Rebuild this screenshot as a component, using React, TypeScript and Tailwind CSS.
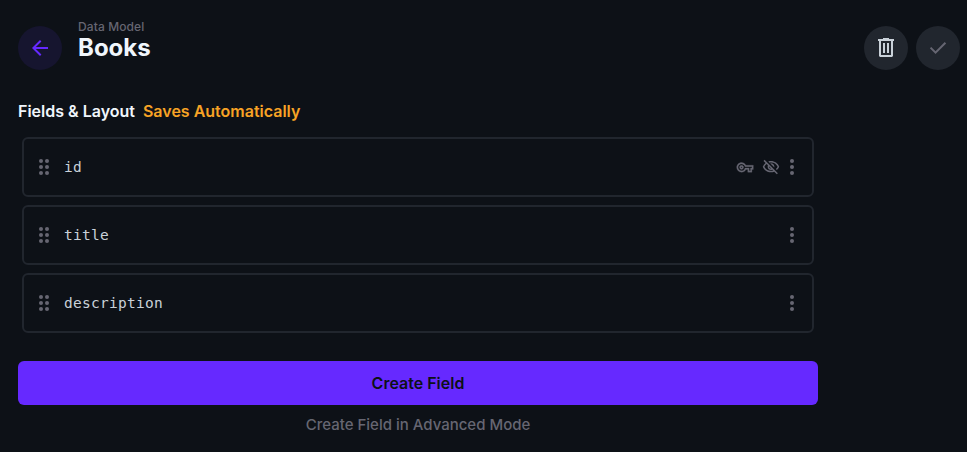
import type { ReactNode } from "react";

const dotRows = [6, 12, 18];

function DragHandle() {
  return (
    <svg viewBox="0 0 24 24" className="size-6 fill-[#666672]">
      {dotRows.map((y) => (
        <g key={y}>
          <circle cx="9" cy={y} r="2" />
          <circle cx="15" cy={y} r="2" />
        </g>
      ))}
    </svg>
  );
}

function MoreIcon() {
  return (
    <svg viewBox="0 0 24 24" className="size-6 fill-[#666672]">
      {dotRows.map((y) => (
        <circle key={y} cx="12" cy={y} r="2" />
      ))}
    </svg>
  );
}

function KeyIcon() {
  return (
    <svg viewBox="-1 -1.5 26 26" className="size-[18px] fill-[#666672] stroke-[#666672] stroke-[0.4]">
      <path d="M22 19h-6v-4h-2.68c-1.14 2.42-3.6 4-6.32 4-3.86 0-7-3.14-7-7s3.14-7 7-7c2.72 0 5.17 1.58 6.32 4H24v6h-2v4zm-4-2h2v-4h2v-2H11.94l-.23-.67C11.01 8.34 9.11 7 7 7c-2.76 0-5 2.24-5 5s2.24 5 5 5c2.11 0 4.01-1.34 4.71-3.33l.23-.67H18v4zM7 15c-1.65 0-3-1.35-3-3s1.35-3 3-3 3 1.35 3 3-1.35 3-3 3zm0-4c-.55 0-1 .45-1 1s.45 1 1 1 1-.45 1-1-.45-1-1-1z" />
    </svg>
  );
}

function HiddenIcon() {
  return (
    <svg viewBox="0 0 24 24" className="size-[18px] fill-[#666672]">
      <path d="M12 6c3.79 0 7.17 2.13 8.82 5.5-.59 1.22-1.42 2.27-2.41 3.12l1.41 1.41c1.39-1.23 2.49-2.77 3.18-4.53C21.27 7.11 17 4 12 4c-1.27 0-2.49.2-3.64.57l1.65 1.65C10.66 6.09 11.32 6 12 6zm-1.07 1.14L13 9.21c.57.25 1.03.71 1.28 1.28l2.07 2.07c.08-.34.14-.7.14-1.07C16.5 9.01 14.48 7 12 7c-.37 0-.72.05-1.07.14zM2.01 3.87l2.68 2.68C3.06 7.83 1.77 9.53 1 11.5 2.73 15.89 7 19 12 19c1.52 0 2.98-.29 4.32-.82l3.42 3.42 1.41-1.41L3.42 2.45 2.01 3.87zm7.5 7.5 2.61 2.61c-.04.01-.08.02-.12.02-1.38 0-2.5-1.12-2.5-2.5 0-.05.01-.08.01-.13zm-3.4-3.4 1.75 1.75c-.23.55-.36 1.15-.36 1.78 0 2.48 2.02 4.5 4.5 4.5.63 0 1.23-.13 1.77-.36l.98.98c-.88.24-1.8.38-2.75.38-3.79 0-7.17-2.13-8.82-5.5.7-1.43 1.72-2.61 2.93-3.53z" />
    </svg>
  );
}

function FieldRow({ name, children }: { name: string; children?: ReactNode }) {
  return (
    <div className="flex h-[60px] items-center rounded-md border-2 border-[#21262e] px-2">
      <DragHandle />
      <span className="ml-2 flex-1 font-['DejaVu_Sans_Mono','Liberation_Mono',monospace] text-[14.5px] leading-6 tracking-[0.27px] text-[#c9d1d9]">
        {name}
      </span>
      <div className="flex items-center gap-2">{children}</div>
      <MoreIcon />
    </div>
  );
}

export default function App() {
  return (
    <div className="flex h-[452px] w-full flex-col overflow-hidden bg-[#0d1117] pl-[18px] font-['Inter',sans-serif]">
      <header className="flex items-start pr-[7px] pt-[26px]">
        <button className="flex size-11 items-center justify-center rounded-full bg-[#16152f]">
          <svg viewBox="0 0 24 24" className="size-6 fill-[#6629ff]">
            <path d="M20 11H7.83l5.59-5.59L12 4l-8 8 8 8 1.41-1.41L7.83 13H20v-2z" />
          </svg>
        </button>
        <div className="-mt-[6px] ml-4 flex-1">
          <div className="text-xs font-medium leading-[14px] tracking-[0.1px] text-[#666672]">Data Model</div>
          <h1 className="text-2xl font-bold leading-7 text-[#f0f6fc]">Books</h1>
        </div>
        <div className="flex gap-2">
          <button className="flex size-11 items-center justify-center rounded-full bg-[#21262e]">
            <svg viewBox="0 0 24 24" className="size-6 fill-[#c9d1d9]">
              <path fillRule="evenodd" d="M9 2h6v1h5v2h-1v15l-1 1H6l-1-1V5H4V3h5zM7 5v14h10V5zM9 7h2v10H9zM13 7h2v10h-2z" />
            </svg>
          </button>
          <button className="flex size-11 items-center justify-center rounded-full bg-[#21262e]">
            <svg viewBox="0 0 24 24" className="size-6 fill-[#666672]">
              <path d="m9.55 18-5.7-5.7 1.425-1.425L9.55 15.15l9.175-9.175L20.15 7.4z" />
            </svg>
          </button>
        </div>
      </header>

      <main className="w-[800px]">
        <h2 className="mt-[31px] flex gap-2 text-base font-semibold leading-5 text-[#f0f6fc]">
          <span>Fields &amp; Layout</span>
          <span className="text-[#f7a325]">Saves Automatically</span>
        </h2>
        <div className="mt-4 flex flex-col gap-2 px-1">
          <FieldRow name="id">
            <KeyIcon />
            <HiddenIcon />
          </FieldRow>
          <FieldRow name="title" />
          <FieldRow name="description" />
        </div>
        <button className="mt-7 flex h-11 w-full items-center justify-center rounded-md bg-[#6629ff] text-base font-semibold text-[#0d1117]">
          Create Field
        </button>
        <button className="mt-2 block w-full text-center text-[15px] font-medium leading-6 text-[#666672]">
          Create Field in Advanced Mode
        </button>
      </main>
    </div>
  );
}
